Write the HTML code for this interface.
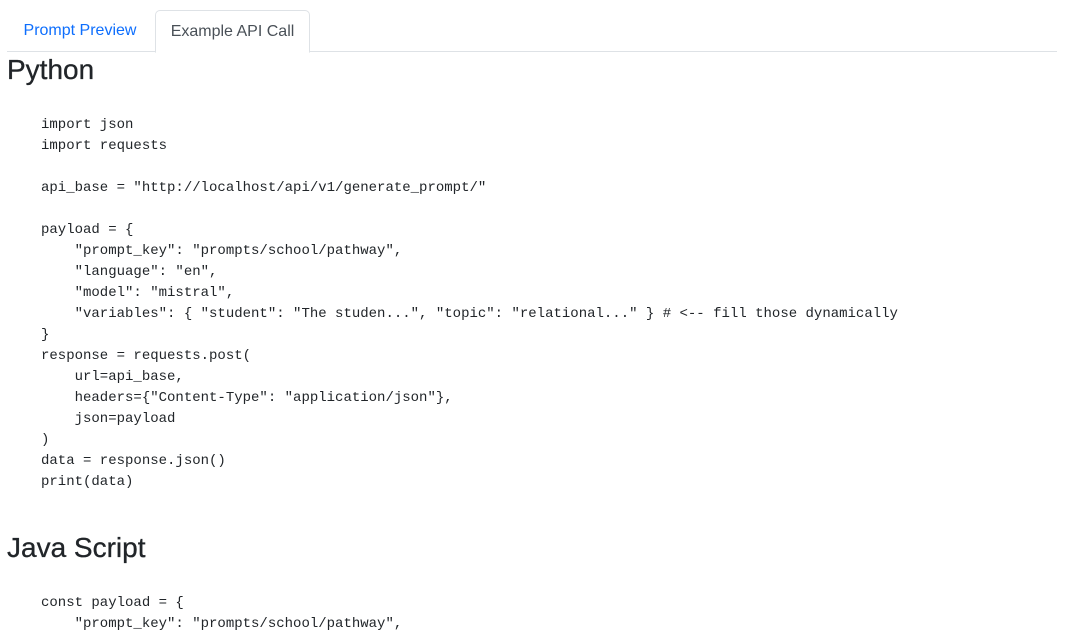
<!DOCTYPE html>
<html><head><meta charset="utf-8"><style>
body{margin:0;width:1073px;height:626px;overflow:hidden;background:#fff;font-family:"Liberation Sans",sans-serif;color:#212529;position:relative}
.nav{position:absolute;left:7px;top:51px;width:1050px;border-top:1px solid #dee2e6}
.tab{position:absolute;top:10px;height:41px;line-height:42px;font-size:16px;text-align:center}
.t1{left:6px;width:148px;color:#0d6efd}
.t2{left:155px;width:153px;border:1px solid #dee2e6;border-bottom:1px solid #fff;border-radius:5px 5px 0 0;background:#fff;color:#495057;height:41px;z-index:2}
h3{position:absolute;left:7px;margin:0;font-size:28px;line-height:34px;font-weight:500;-webkit-text-stroke:0.3px #212529}
pre{position:absolute;left:41px;margin:0;font-family:"Liberation Mono",monospace;font-size:14px;line-height:21px;color:#212529}
</style></head><body>
<div class="nav"></div>
<div class="tab t1">Prompt Preview</div>
<div class="tab t2">Example API Call</div>
<h3 style="top:53px">Python</h3>
<pre style="top:115px">import json
import requests

api_base = "http://localhost/api/v1/generate_prompt/"

payload = {
    "prompt_key": "prompts/school/pathway",
    "language": "en",
    "model": "mistral",
    "variables": { "student": "The studen...", "topic": "relational..." } # &lt;-- fill those dynamically
}
response = requests.post(
    url=api_base,
    headers={"Content-Type": "application/json"},
    json=payload
)
data = response.json()
print(data)</pre>
<h3 style="top:531px">Java Script</h3>
<pre style="top:593px">const payload = {
    "prompt_key": "prompts/school/pathway",</pre>
</body></html>
